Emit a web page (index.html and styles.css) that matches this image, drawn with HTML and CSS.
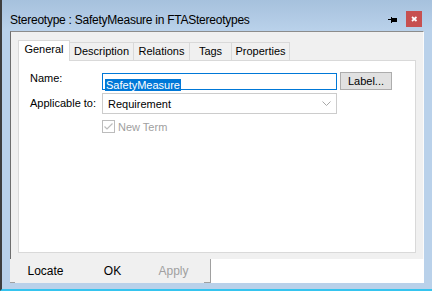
FILE: index.html
```html
<!DOCTYPE html>
<html>
<head>
    <title>Stereotype : SafetyMeasure in FTAStereotypes</title>
    <link rel="stylesheet" href="styles.css">
</head>
<body>
    <div class="window">
        <div class="titlebar">
            <span class="title">Stereotype : SafetyMeasure in FTAStereotypes</span>
            <svg class="pin" width="9" height="6" viewBox="0 0 9 6">
                <rect x="0" y="2" width="3" height="1" fill="#000"/>
                <rect x="3" y="0" width="1" height="6" fill="#000"/>
                <rect x="4" y="1" width="5" height="4" fill="#000"/>
            </svg>
            <span class="close">
                <svg width="16" height="16" viewBox="0 0 16 16">
                    <path d="M6 6 L10.5 10 M10.5 6 L6 10" stroke="#fff" stroke-width="1.7"/>
                </svg>
            </span>
        </div>

        <div class="client">
            <div class="tabs">
                <div class="tab selected tab-general">General</div>
                <div class="tab tab-description">Description</div>
                <div class="tab tab-relations">Relations</div>
                <div class="tab tab-tags">Tags</div>
                <div class="tab tab-properties">Properties</div>
            </div>
            <div class="panel">
                <div class="row row-name">
                    <label class="field-label">Name:</label>
                    <div class="textbox"><span class="selection">SafetyMeasure</span></div>
                    <button class="label-button">Label...</button>
                </div>
                <div class="row row-applicable">
                    <label class="field-label">Applicable to:</label>
                    <div class="combo">
                        <span>Requirement</span>
                        <svg class="chevron" width="9" height="5" viewBox="0 0 9 5">
                            <path d="M0.5 0.5 L4.5 4.5 L8.5 0.5" stroke="#a8a8a8" fill="none"/>
                        </svg>
                    </div>
                </div>
                <div class="row row-check">
                    <span class="checkbox">
                        <svg width="11" height="11" viewBox="0 0 11 11">
                            <path d="M1.5 5.5 L4 8 L9.5 2.5" stroke="#bcbcbc" stroke-width="1.2" fill="none"/>
                        </svg>
                    </span>
                    <span class="check-text">New Term</span>
                </div>
            </div>
        </div>

        <div class="footer">
            <div class="bar">
                <button class="bar-button btn-locate">Locate</button>
                <button class="bar-button btn-ok">OK</button>
                <button class="bar-button btn-apply">Apply</button>
            </div>
            <div class="bar-rest"></div>
        </div>
    </div>
</body>
</html>
```

FILE: styles.css
```css
body {
    margin: 0;
    font-family: "Liberation Sans", Arial, sans-serif;
}
.window {
    width: 432px;
    height: 291px;
    box-sizing: border-box;
    border-left: 2px solid #3e3e3e;
    border-bottom: 2px solid #35c4ef;
    padding: 0 8px 6px 8px;
    background: linear-gradient(#a6c1dd, #b9d1ea 30px);
}
.titlebar {
    display: flex;
    align-items: flex-start;
    height: 31px;
}
.title {
    margin-top: 13px;
    font-size: 12px;
    line-height: 14px;
    letter-spacing: -0.25px;
    color: #000;
}
.pin {
    margin-left: auto;
    margin-top: 17px;
}
.close {
    display: block;
    width: 16px;
    height: 16px;
    margin: 11px 2px 0 9px;
    background-color: #c75050;
}
.close svg {
    display: block;
}

.client {
    height: 228px;
    box-sizing: border-box;
    border-top: 1px solid #8c8c8c;
    border-left: 1px solid #6e6e6e;
    border-right: 1px solid #fbfbfb;
    background-color: #f0f0f0;
    padding: 8px 7px 6px 7px;
}
.tabs {
    display: flex;
    align-items: flex-end;
    height: 20px;
}
.tab {
    box-sizing: border-box;
    height: 18px;
    border-top: 1px solid #d9d9d9;
    border-right: 1px solid #d9d9d9;
    background-color: #f0f0f0;
    font-size: 11px;
    line-height: 17px;
    text-align: center;
    color: #000;
}
.tab.selected {
    position: relative;
    z-index: 1;
    height: 21px;
    margin-bottom: -1px;
    border-left: 1px solid #d9d9d9;
    background-color: #fff;
}
.tab-general { width: 52px; }
.tab-description { width: 64px; }
.tab-relations { width: 56px; }
.tab-tags { width: 42px; }
.tab-properties { width: 58px; }

.panel {
    height: 193px;
    box-sizing: border-box;
    border: 1px solid #d9d9d9;
    background-color: #fff;
    padding: 11px 0 0 11px;
}
.row {
    display: flex;
}
.row-name {
    align-items: flex-end;
    height: 18px;
}
.row-applicable {
    align-items: center;
    margin-top: 3px;
}
.row-check {
    align-items: center;
    margin-top: 6px;
    padding-left: 72px;
}
.field-label {
    width: 72px;
    font-size: 11px;
    line-height: 13px;
    color: #000;
}
.row-name .field-label {
    align-self: flex-start;
}
.textbox {
    width: 235px;
    height: 17px;
    box-sizing: border-box;
    border: 1px solid #0078d7;
    padding: 1px 0 0 2px;
}
.selection {
    display: inline-block;
    height: 12px;
    padding: 0 1px;
    font-size: 11px;
    line-height: 12px;
    color: #fff;
    background-color: #0078d7;
}
.label-button {
    width: 52px;
    height: 18px;
    margin-left: 3px;
    padding: 0;
    border: 1px solid #adadad;
    background-color: #e1e1e1;
    font-family: inherit;
    font-size: 11px;
    color: #000;
}
.combo {
    display: flex;
    align-items: center;
    width: 235px;
    height: 21px;
    box-sizing: border-box;
    border: 1px solid #cccccc;
    padding-left: 5px;
    font-size: 11px;
    color: #000;
}
.chevron {
    margin-left: auto;
    margin-right: 5px;
}
.checkbox {
    display: flex;
    align-items: center;
    justify-content: center;
    width: 13px;
    height: 13px;
    box-sizing: border-box;
    border: 1px solid #bcbcbc;
}
.check-text {
    margin-left: 3px;
    font-size: 11px;
    color: #a0a0a0;
}

.footer {
    display: flex;
    height: 24px;
}
.bar {
    position: relative;
    display: flex;
    width: 201px;
    box-sizing: border-box;
    padding-left: 1px;
    border-right: 1px solid #a0a0a0;
    background-color: #f0f0f0;
}
.bar::before,
.bar::after {
    content: "";
    position: absolute;
    bottom: 0;
    height: 1px;
    background-color: #a0a0a0;
}
.bar::before { left: 0; width: 5px; }
.bar::after { right: 0; width: 6px; }
.bar-rest {
    flex: 1;
    background-color: #fff;
}
.bar-button {
    height: 24px;
    padding: 0;
    border: none;
    background: none;
    font-family: inherit;
    font-size: 12px;
    line-height: 24px;
    color: #000;
}
.btn-locate { width: 69px; }
.btn-ok { width: 65px; }
.btn-apply { width: 57px; color: #a0a0a0; }
```
